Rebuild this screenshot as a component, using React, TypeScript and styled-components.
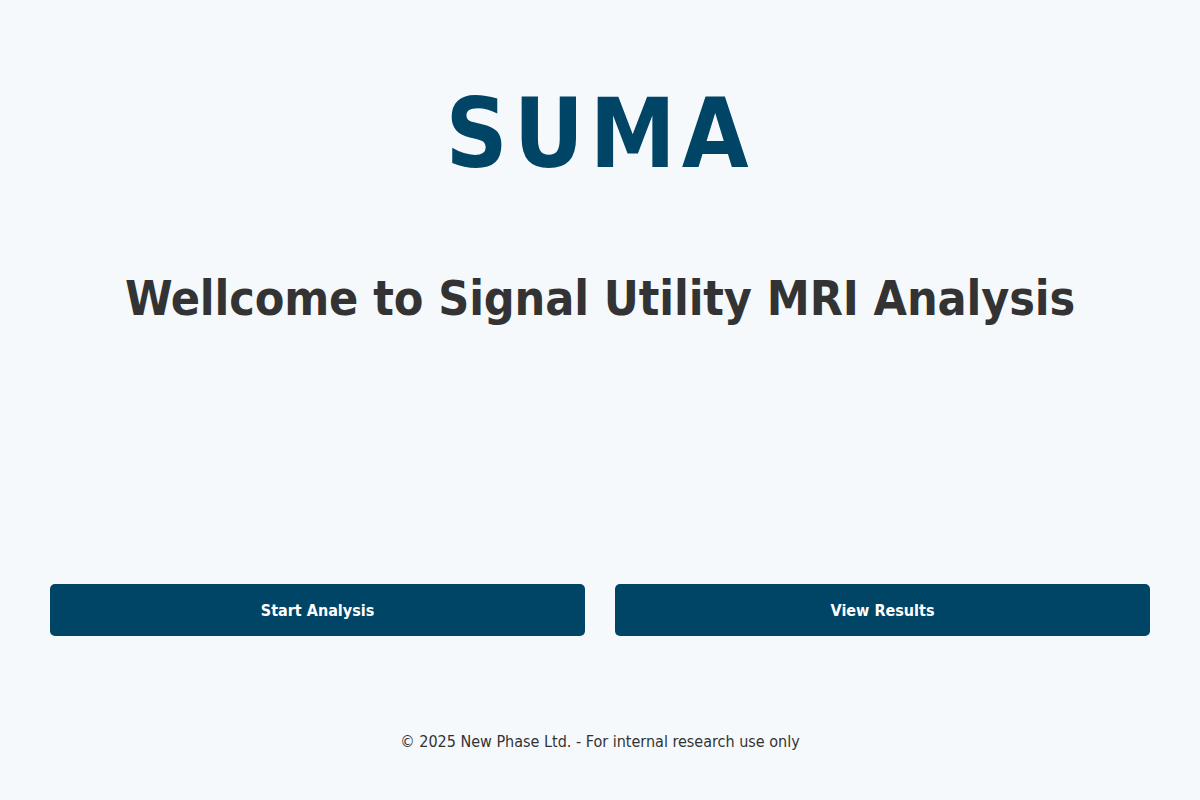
import React from "react";
import styled, { createGlobalStyle } from "styled-components";

const Global = createGlobalStyle`
  html, body { margin: 0; padding: 0; background: #f5f9fc; }
  body { font-family: "DejaVu Sans Condensed", "DejaVu Sans", sans-serif; color: #333; }
`;

const Page = styled.div`
  width: 1200px;
  height: 800px;
  box-sizing: border-box;
  display: flex;
  flex-direction: column;
  align-items: center;
  padding: 0 50px;
`;

const Logo = styled.h1`
  margin: 77px 0 0;
  font-family: "DejaVu Sans Condensed", "DejaVu Sans", sans-serif;
  font-weight: bold;
  font-size: 96px;
  line-height: 114px;
  letter-spacing: 6px;
  color: #004466;
`;

const Title = styled.h2`
  margin: 79px 0 0;
  font-size: 48px;
  line-height: 56px;
  font-weight: bold;
  letter-spacing: -0.12px;
  color: #333;
`;

const Actions = styled.div`
  margin-top: 258px;
  width: 100%;
  display: grid;
  grid-template-columns: 1fr 1fr;
  gap: 30px;
`;

const Button = styled.button`
  height: 52px;
  border: none;
  border-radius: 5px;
  background: #004466;
  color: #fff;
  font-family: "DejaVu Sans Condensed", "DejaVu Sans", sans-serif;
  font-weight: bold;
  font-size: 16px;
  cursor: pointer;
`;

const Footer = styled.footer`
  margin-top: 96px;
  font-size: 16px;
  color: #333;
`;

export default function App() {
  return (
    <>
      <Global />
      <Page>
        <Logo>SUMA</Logo>
        <Title>Wellcome to Signal Utility MRI Analysis</Title>
        <Actions>
          <Button>Start Analysis</Button>
          <Button>View Results</Button>
        </Actions>
        <Footer>© 2025 New Phase Ltd. - For internal research use only</Footer>
      </Page>
    </>
  );
}
